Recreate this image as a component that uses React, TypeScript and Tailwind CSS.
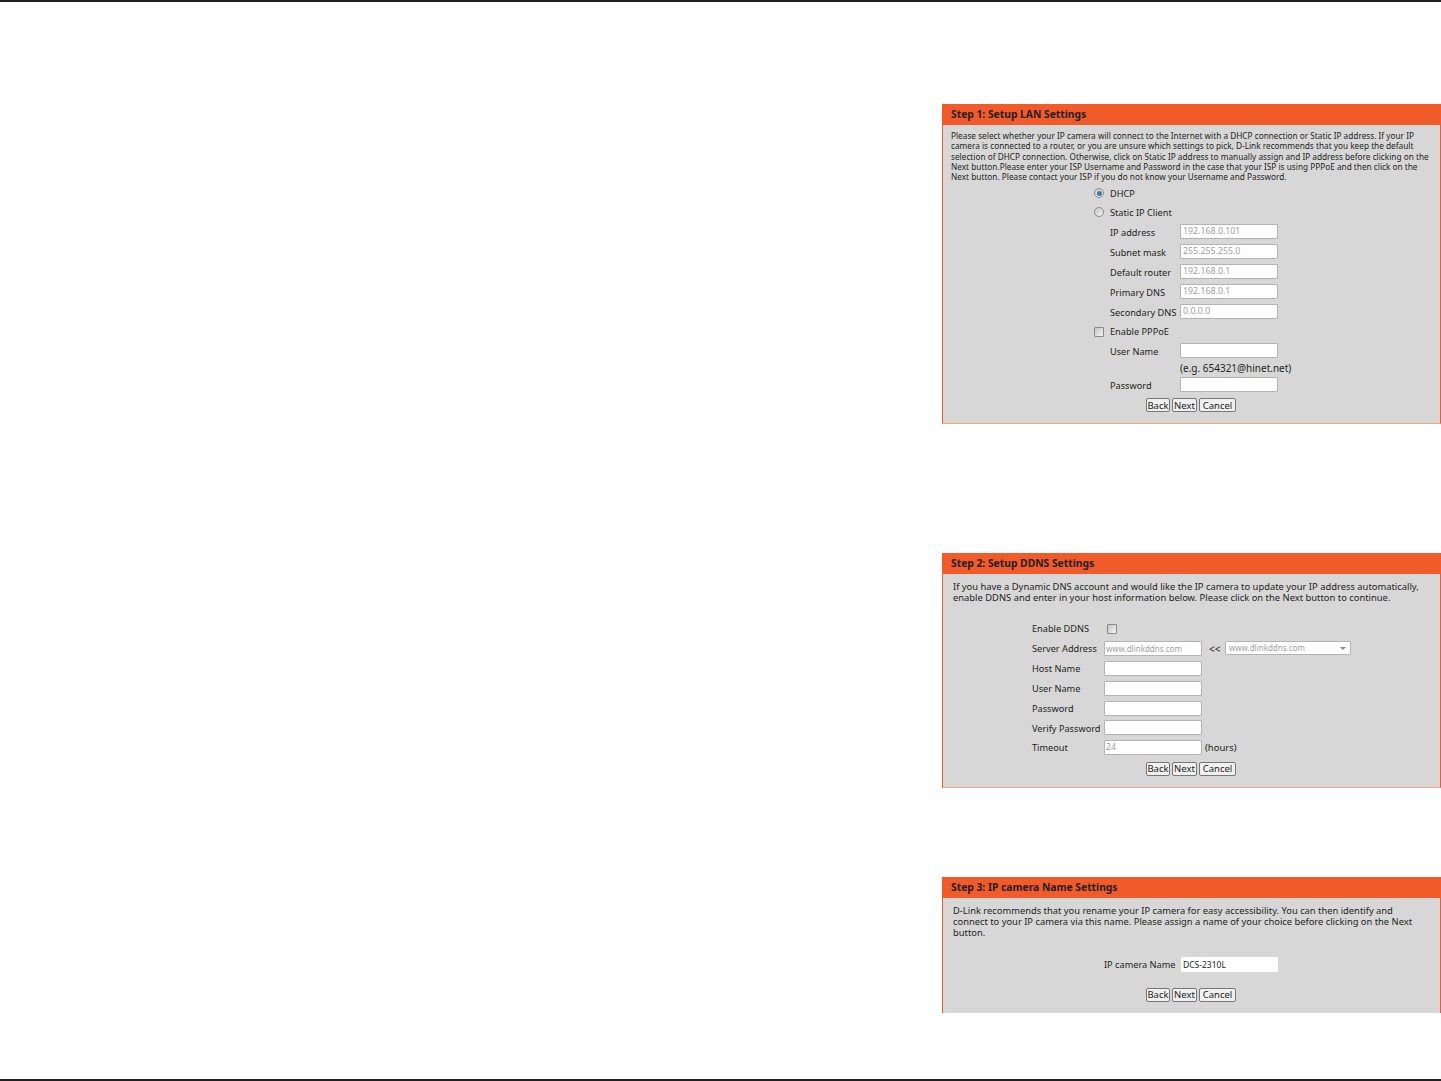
import React from 'react';

const Field = ({ value = '', disabled = false, pad = 'px-[2px]' }: { value?: string; disabled?: boolean; pad?: string }) => (
  <input
    className={`w-[98px] h-[15px] mb-[2px] ${pad} bg-white border border-[#b4b4b4] rounded-[1px] text-[8.8px] text-[#231f20] disabled:text-[#a0a0a0] outline-none`}
    defaultValue={value}
    disabled={disabled}
  />
);

const Buttons = ({ className }: { className: string }) => (
  <div className={`flex items-center gap-[2px] ${className}`}>
    {[
      { label: 'Back', width: 'w-[24px]' },
      { label: 'Next', width: 'w-[25px]' },
      { label: 'Cancel', width: 'w-[37px]' },
    ].map((b) => (
      <button
        key={b.label}
        className={`${b.width} h-[14px] flex items-center justify-center bg-[#f0f0f0] border border-[#777777] rounded-[2px] text-[9.5px] leading-none text-[#231f20]`}
      >
        {b.label}
      </button>
    ))}
  </div>
);

const Header = ({ title }: { title: string }) => (
  <div className="h-[21px] flex items-center pl-[9px] pt-[1px] bg-[#f15a29] text-[10.3px] font-bold text-[#231f20] whitespace-nowrap">
    {title}
  </div>
);

const Check = () => (
  <span className="block w-[10px] h-[10px] bg-gradient-to-br from-[#c4c4c4] to-[#f4f4f4] border border-[#8a8a8a] rounded-[1px]" />
);

const Radio = ({ on = false }: { on?: boolean }) => (
  <span className="flex w-[10px] h-[10px] items-center justify-center bg-gradient-to-br from-[#c4c4c4] to-[#f4f4f4] border border-[#8a8a8a] rounded-full">
    {on && <span className="block w-[5px] h-[5px] rounded-full bg-[#3f74a8]" />}
  </span>
);

const LanRow = ({
  mark,
  label,
  height = 'h-[20px]',
  children,
}: {
  mark?: React.ReactNode;
  label?: string;
  height?: string;
  children?: React.ReactNode;
}) => (
  <div className={`flex items-center pl-[151px] ${height}`}>
    <div className="w-[16px]">{mark}</div>
    <div className="w-[70px] whitespace-nowrap">{label}</div>
    {children}
  </div>
);

const DdnsRow = ({
  label,
  height = 'h-[20px]',
  children,
}: {
  label: string;
  height?: string;
  children: React.ReactNode;
}) => (
  <div className={`flex items-center pl-[89px] ${height}`}>
    <div className="w-[72px] whitespace-nowrap">{label}</div>
    {children}
  </div>
);

const Step1 = () => (
  <section className="h-[320px] flex flex-col">
    <Header title="Step 1: Setup LAN Settings" />
    <div className="flex-1 bg-[#d7d7d7] border-x border-b border-x-[#f15a29] border-b-[#f4a582] text-[9.2px] text-[#231f20]">
      <div className="pt-[6px] pl-[8px] leading-[10.3px] text-[8.25px] whitespace-nowrap">
        <p>Please select whether your IP camera will connect to the Internet with a DHCP connection or Static IP address. If your IP</p>
        <p>camera is connected to a router, or you are unsure which settings to pick, D-Link recommends that you keep the default</p>
        <p>selection of DHCP connection. Otherwise, click on Static IP address to manually assign and IP address before clicking on the</p>
        <p>Next button.Please enter your ISP Username and Password in the case that your ISP is using PPPoE and then click on the</p>
        <p>Next button. Please contact your ISP if you do not know your Username and Password.</p>
      </div>
      <div className="mt-[2px]">
        <LanRow mark={<Radio on />} label="DHCP" height="h-[18px]" />
        <LanRow mark={<Radio />} label="Static IP Client" />
        <LanRow label="IP address"><Field value="192.168.0.101" disabled /></LanRow>
        <LanRow label="Subnet mask"><Field value="255.255.255.0" disabled /></LanRow>
        <LanRow label="Default router"><Field value="192.168.0.1" disabled /></LanRow>
        <LanRow label="Primary DNS"><Field value="192.168.0.1" disabled /></LanRow>
        <LanRow label="Secondary DNS"><Field value="0.0.0.0" disabled /></LanRow>
        <LanRow mark={<Check />} label="Enable PPPoE" height="h-[19px]" />
        <LanRow label="User Name"><Field /></LanRow>
        <LanRow height="h-[14px]"><span className="whitespace-nowrap text-[10px]">(e.g. 654321@hinet.net)</span></LanRow>
        <LanRow label="Password"><Field /></LanRow>
        <Buttons className="h-[20px] pl-[203px]" />
      </div>
    </div>
  </section>
);

const Step2 = () => (
  <section className="h-[235px] flex flex-col mt-[129px]">
    <Header title="Step 2: Setup DDNS Settings" />
    <div className="flex-1 bg-[#d7d7d7] border-x border-b border-x-[#f15a29] border-b-[#f4a582] text-[9.2px] text-[#231f20]">
      <div className="pt-[7px] pl-[10px] leading-[11px] text-[9.38px] whitespace-nowrap">
        <p>If you have a Dynamic DNS account and would like the IP camera to update your IP address automatically,</p>
        <p>enable DDNS and enter in your host information below. Please click on the Next button to continue.</p>
      </div>
      <div className="mt-[16px]">
        <DdnsRow label="Enable DDNS">
          <span className="ml-[3px]"><Check /></span>
        </DdnsRow>
        <DdnsRow label="Server Address">
          <Field value="www.dlinkddns.com" pad="px-[1px] text-[8px]" disabled />
          <span className="ml-[7px] w-[16px] text-[10px]">&lt;&lt;</span>
          <div className="w-[126px] h-[14px] mb-[2px] flex items-center justify-between pl-[3px] pr-[4px] bg-white border border-[#b4b4b4] rounded-[1px] text-[8px] text-[#a0a0a0]">
            <span>www.dlinkddns.com</span>
            <span className="w-0 h-0 border-x-[3px] border-t-[3px] border-x-transparent border-t-[#8a8a8a]" />
          </div>
        </DdnsRow>
        <DdnsRow label="Host Name"><Field /></DdnsRow>
        <DdnsRow label="User Name"><Field /></DdnsRow>
        <DdnsRow label="Password"><Field /></DdnsRow>
        <DdnsRow label="Verify Password" height="h-[19px]"><Field /></DdnsRow>
        <DdnsRow label="Timeout">
          <Field value="24" pad="px-[1px]" disabled />
          <span className="ml-[3px] text-[9.5px]">(hours)</span>
        </DdnsRow>
        <Buttons className="h-[20px] pl-[203px] mt-[1px]" />
      </div>
    </div>
  </section>
);

const Step3 = () => (
  <section className="h-[136px] flex flex-col mt-[89px]">
    <Header title="Step 3: IP camera Name Settings" />
    <div className="flex-1 bg-[#d7d7d7] border-x border-x-[#f15a29] text-[9.2px] text-[#231f20]">
      <div className="pt-[7px] pl-[10px] leading-[11px] text-[9.35px] whitespace-nowrap">
        <p>D-Link recommends that you rename your IP camera for easy accessibility. You can then identify and</p>
        <p>connect to your IP camera via this name. Please assign a name of your choice before clicking on the Next</p>
        <p>button.</p>
      </div>
      <div className="flex items-center h-[20px] mt-[17px] pl-[161px]">
        <div className="w-[77px] whitespace-nowrap">IP camera Name</div>
        <input className="w-[97px] h-[15px] mb-[2px] px-[2px] bg-white rounded-[1px] text-[8.5px] text-[#231f20] outline-none" defaultValue="DCS-2310L" />
      </div>
      <Buttons className="h-[20px] mt-[10px] pl-[203px]" />
    </div>
  </section>
);

export default function App() {
  return (
    <div className="w-[1441px] h-[1081px] flex flex-col justify-between bg-white font-['Noto_Sans',sans-serif]">
      <div className="h-[2px] bg-[#231f20]" />
      <main className="flex-1 pt-[102px] pl-[942px]">
        <Step1 />
        <Step2 />
        <Step3 />
      </main>
      <div className="h-[2px] bg-[#231f20]" />
    </div>
  );
}
